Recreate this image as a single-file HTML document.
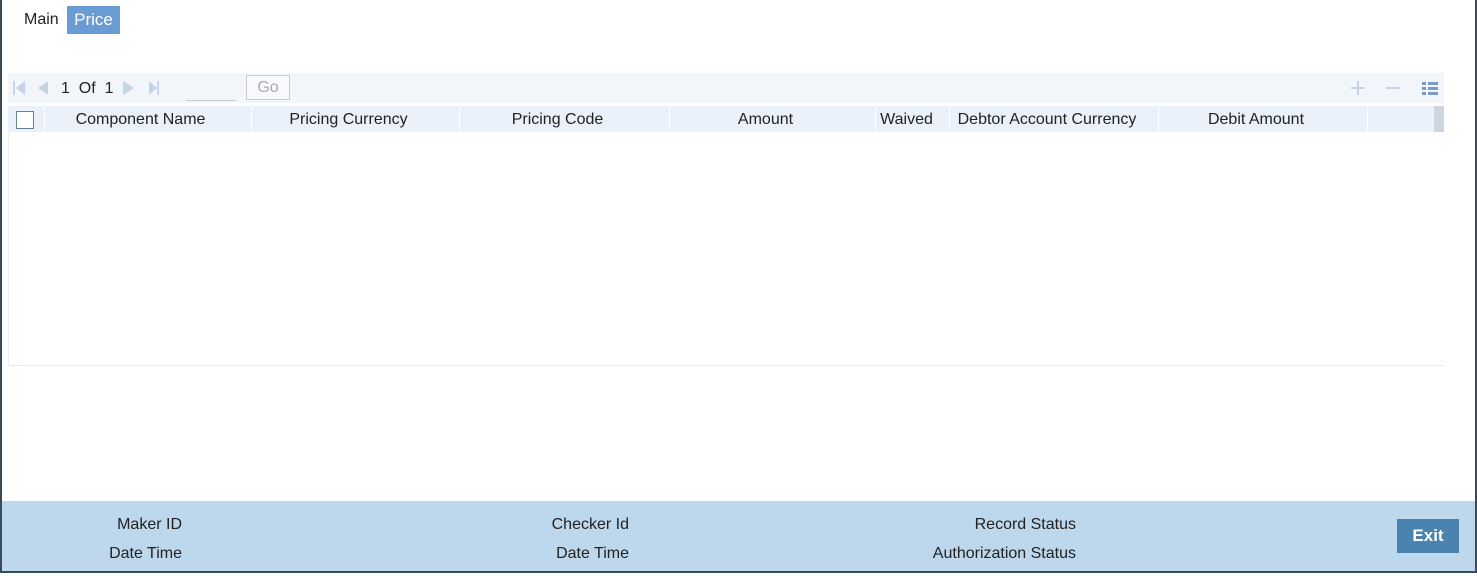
<!DOCTYPE html>
<html><head><style>
body{margin:0;width:1477px;height:576px;background:#fff;font-family:"Liberation Sans",sans-serif;font-size:16px;color:#222;position:relative;overflow:hidden}
.frame{position:absolute;left:0;top:0;width:1477px;height:573px;border-left:2px solid #3a4a5a;border-right:2px solid #3a4a5a;border-bottom:2px solid #3a4a5a;box-sizing:border-box}
.abs{position:absolute}
.tb{left:8px;top:73px;width:1436px;height:30px;background:#f2f6fb}
.hd{left:8px;top:106px;width:1436px;height:26px;background:#eaf1fa}
.col{position:absolute;top:107px;height:26px;line-height:26px;text-align:center;box-sizing:border-box;padding-right:14px}
.sep{position:absolute;top:106px;height:26px;width:1px;background:#fff}
.foot{left:2px;top:501px;width:1473px;height:70px;background:#bdd8ec}
.fl{position:absolute;font-size:16px;color:#222;text-align:right}
</style></head><body>
<div class="frame"></div>
<div class="abs" style="left:24px;top:11px">Main</div>
<div class="abs" style="left:67px;top:6px;width:53px;height:28px;background:#6b9bd3;color:#fff;line-height:27px;text-align:center;font-size:17px">Price</div>
<div class="abs tb"></div>
<svg class="abs" style="left:12px;top:80px" width="150" height="16"><path d="M1 1h2v14H1z M4 8l9-7v14z" fill="#c4d3e6"/><path d="M26 8l10-7v14z" fill="#c4d3e6"/><path d="M111 1l11 7-11 7z" fill="#c4d3e6"/><path d="M137 1l8 7-8 7z M145 1h2v14h-2z" fill="#c4d3e6"/></svg>
<div class="abs" style="left:61px;top:80px">1&nbsp; Of&nbsp; 1</div>
<div class="abs" style="left:186px;top:100px;width:50px;height:1px;background:#ccc"></div>
<div class="abs" style="left:246px;top:75px;width:44px;height:25px;border:1px solid #ccc;box-sizing:border-box;color:#aaa;text-align:center;line-height:23px;background:#f7f9fc">Go</div>
<svg class="abs" style="left:1350px;top:80px" width="90" height="18"><path d="M1 8h14M8 1v14" stroke="#c4d3e6" stroke-width="2"/><path d="M36 8h14" stroke="#c4d3e6" stroke-width="2"/><path d="M72 2h4v3h-4zM78 2h10v3H78zM72 7h4v3h-4zM78 7h10v3H78zM72 12h4v3h-4zM78 12h10v3H78z" fill="#7a9cc6"/></svg>
<div class="abs hd"></div>
<div class="abs" style="left:16px;top:111px;width:18px;height:18px;border:1px solid #6a7f96;background:#fff;box-sizing:border-box"></div>
<div class="sep" style="left:44px"></div><div class="sep" style="left:251px"></div><div class="sep" style="left:459px"></div><div class="sep" style="left:669px"></div><div class="sep" style="left:875px"></div><div class="sep" style="left:949px"></div><div class="sep" style="left:1158px"></div><div class="sep" style="left:1367px"></div>
<div class="col" style="left:44px;width:207px">Component Name</div>
<div class="col" style="left:252px;width:207px">Pricing Currency</div>
<div class="col" style="left:460px;width:209px">Pricing Code</div>
<div class="col" style="left:670px;width:205px">Amount</div>
<div class="col" style="left:876px;width:73px;padding-right:12px">Waived</div>
<div class="col" style="left:950px;width:208px">Debtor Account Currency</div>
<div class="col" style="left:1159px;width:208px">Debit Amount</div>
<div class="abs" style="left:1434px;top:106px;width:10px;height:26px;background:#ccd6e0"></div>
<div class="abs" style="left:8px;top:132px;width:1px;height:233px;background:#eee"></div>
<div class="abs" style="left:8px;top:365px;width:1436px;height:1px;background:#e8e8e8"></div>
<div class="abs foot"></div>
<div class="fl" style="left:60px;top:516px;width:122px">Maker ID</div>
<div class="fl" style="left:60px;top:545px;width:122px">Date Time</div>
<div class="fl" style="left:500px;top:516px;width:129px">Checker Id</div>
<div class="fl" style="left:500px;top:545px;width:129px">Date Time</div>
<div class="fl" style="left:900px;top:516px;width:176px">Record Status</div>
<div class="fl" style="left:900px;top:545px;width:176px">Authorization Status</div>
<div class="abs" style="left:1397px;top:519px;width:62px;height:34px;background:#4a82b0;color:#fff;font-weight:bold;font-size:17px;text-align:center;line-height:33px">Exit</div>
</body></html>
